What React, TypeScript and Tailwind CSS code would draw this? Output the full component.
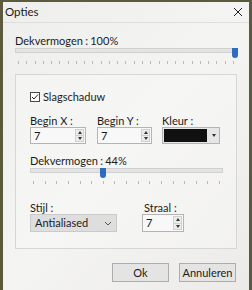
import React from 'react';

const font = { fontFamily: 'Lato, "Noto Sans", sans-serif' };

const Ticks: React.FC<{ count: number }> = ({ count }) => (
  <div className="flex justify-between px-[3px] mt-[3px]">
    {Array.from({ length: count }).map((_, i) => (
      <div key={i} className="w-px h-[3px] bg-[#b9b9b9]" />
    ))}
  </div>
);

const Slider: React.FC<{ pos: number; ticks: number }> = ({ pos, ticks }) => (
  <div>
    <div className="relative h-[10px]">
      <div className="mt-[1px] w-full h-[5px] bg-[#e4e4e4] border border-[#d0d0d0]" />
      <div
        className="absolute top-0 w-[6px] h-[10px] bg-[#2e6cc2] rounded-b-[3px]"
        style={{ left: `calc(${pos}% - 3px)` }}
      />
    </div>
    <Ticks count={ticks} />
  </div>
);

const Spinner: React.FC<{ value: string; width: string }> = ({ value, width }) => (
  <div className={`flex items-stretch border border-[#b4b4b4] bg-[#f8f8f8] ${width}`}>
    <div className="flex-1 pl-[3px] text-[11px] leading-[15px] text-[#1a1a1a]">{value}</div>
    <div className="w-[9px] my-[1px] mr-[1px] flex flex-col border border-[#d0d0d0] bg-[#ececec]">
      <div className="flex-1 flex items-center justify-center">
        <div className="w-0 h-0 border-l-[2px] border-r-[2px] border-b-[3px] border-l-transparent border-r-transparent border-b-[#333]" />
      </div>
      <div className="flex-1 flex items-center justify-center border-t border-[#d0d0d0]">
        <div className="w-0 h-0 border-l-[2px] border-r-[2px] border-t-[3px] border-l-transparent border-r-transparent border-t-[#333]" />
      </div>
    </div>
  </div>
);

export default function App() {
  return (
    <div className="w-[252px] h-[290px] overflow-hidden bg-[#5c5a3e] pl-[3px] pt-[2px]" style={font}>
      <div className="w-[246px] h-[288px] bg-gradient-to-br from-[#eeeeec] via-[#f4f4f2] to-[#ecebea] text-[#1c1c1c]">
        {/* title bar */}
        <div className="h-[21px] flex items-center justify-between pl-[2px] pr-[6px] border-b border-[#dedede]">
          <span className="text-[11.5px]">Opties</span>
          <svg width="10" height="10" viewBox="0 0 10 10">
            <path d="M1 1 L9 9 M9 1 L1 9" stroke="#222" strokeWidth="1" />
          </svg>
        </div>

        <div className="pl-[12px] pr-[12px] pt-[12px]">
          <div className="text-[11px] leading-[12px] [word-spacing:-0.5px]">Dekvermogen : 100%</div>
          <Slider pos={99} ticks={27} />

          {/* group panel */}
          <div className="mt-[10px] h-[175px] border border-[#d6d6d6] bg-[#f7f7f6]/50 pl-[14px] pr-[12px] pt-[15px]">
            <div className="flex items-center gap-[3px] h-[14px]">
              <div className="w-[10px] h-[10px] border border-[#4a4a4a] bg-white flex items-center justify-center">
                <svg width="8" height="8" viewBox="0 0 8 8">
                  <path d="M1 4 L3 6 L7 1.5" fill="none" stroke="#222" strokeWidth="1" />
                </svg>
              </div>
              <span className="text-[11px] leading-[14px]">Slagschaduw</span>
            </div>

            <div className="flex mt-[10px]">
              <div className="w-[67px]">
                <div className="text-[11px] leading-[13px]">Begin X :</div>
                <Spinner value="7" width="w-[56px] h-[17px]" />
              </div>
              <div className="w-[65px]">
                <div className="text-[11px] leading-[13px]">Begin Y :</div>
                <Spinner value="7" width="w-[55px] h-[17px]" />
              </div>
              <div>
                <div className="text-[11px] leading-[13px]">Kleur :</div>
                <div className="flex items-stretch h-[17px] w-[58px] border border-[#b4b4b4] bg-[#e6e6e6]">
                  <div className="flex-1 m-[1px] bg-[#111]" />
                  <div className="w-[11px] flex items-center justify-center">
                    <div className="w-0 h-0 border-l-[2px] border-r-[2px] border-t-[3px] border-l-transparent border-r-transparent border-t-[#333]" />
                  </div>
                </div>
              </div>
            </div>

            <div className="text-[11px] leading-[12px] mt-[11px] [word-spacing:-0.5px]">Dekvermogen : 44%</div>
            <div className="w-[193px]">
              <Slider pos={38} ticks={17} />
            </div>

            <div className="flex mt-[18px]">
              <div className="w-[112px]">
                <div className="text-[11px] leading-[12px]">Stijl :</div>
                <div className="w-[87px] h-[18px] bg-[#dedede] border border-[#cacaca] flex items-center justify-between pl-[4px] pr-[4px]">
                  <span className="text-[11px]">Antialiased</span>
                  <svg width="8" height="5" viewBox="0 0 8 5">
                    <path d="M1 1 L4 4 L7 1" fill="none" stroke="#555" strokeWidth="1" />
                  </svg>
                </div>
              </div>
              <div>
                <div className="text-[11px] leading-[12px] pl-[2px]">Straal :</div>
                <Spinner value="7" width="w-[42px] h-[18px]" />
              </div>
            </div>
          </div>

          {/* buttons */}
          <div className="flex justify-end gap-[10px] mt-[14px] pr-[1px]">
            <button className="w-[57px] h-[19px] border border-[#adadad] bg-[#e4e4e4] text-[11px] leading-[15px]">Ok</button>
            <button className="w-[57px] h-[19px] border border-[#adadad] bg-[#e4e4e4] text-[11px] leading-[15px]">Annuleren</button>
          </div>
        </div>
      </div>
    </div>
  );
}
